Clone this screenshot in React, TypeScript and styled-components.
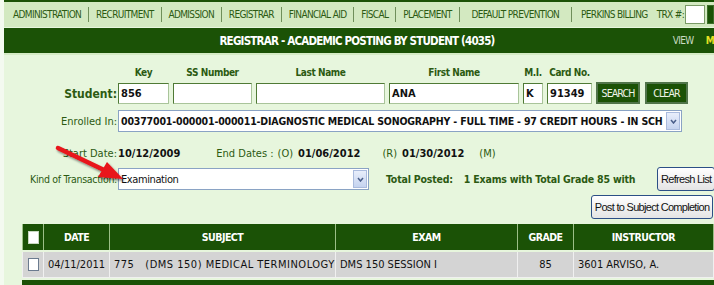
import React from 'react';
import styled, { createGlobalStyle } from 'styled-components';

const GlobalStyle = createGlobalStyle`
  html, body {
    margin: 0;
    padding: 0;
    background: #ffffff;
    font-family: 'DejaVu Sans Condensed', 'DejaVu Sans', sans-serif;
  }
`;

const DARK = '#1b5206';
const NAV_BG = '#d3e9c1';
const BODY_BG = '#e7f6dd';
const LABEL = '#2c5a12';

const Page = styled.div`
  position: relative;
  width: 714px;
  height: 285px;
  overflow: hidden;
  background: ${BODY_BG};
  border-left: 4px solid #f4faf0;
  box-sizing: border-box;
`;

const TopLine = styled.div`
  height: 2px;
  background: ${DARK};
  margin-left: -4px;
`;

const Nav = styled.div`
  display: flex;
  align-items: center;
  height: 25px;
  background: ${NAV_BG};
  padding-left: 13px;
  margin-left: -4px;
  font-size: 10px;
  letter-spacing: -0.65px;
  color: ${LABEL};
  white-space: nowrap;
`;

const NavItem = styled.span<{ $pad?: number }>`
  padding: 0 ${(p) => p.$pad ?? 7}px;
  &:first-child {
    padding-left: 0;
  }
`;

const NavSep = styled.span`
  width: 1px;
  height: 15px;
  background: #6f8f5a;
`;

const TrxInput = styled.span`
  display: inline-block;
  box-sizing: border-box;
  width: 25px;
  height: 19px;
  background: #fff;
  border: 1px solid #7a9a66;
  margin-left: 1px;
`;

const TrxGo = styled.span`
  display: inline-block;
  box-sizing: border-box;
  width: 8px;
  height: 19px;
  margin-left: 2px;
  background: ${DARK};
  border: 1px solid #3d6e2a;
`;

const TitleBar = styled.div`
  position: relative;
  display: flex;
  align-items: center;
  justify-content: center;
  height: 25px;
  margin-top: 1px;
  margin-left: -4px;
  background: ${DARK};
  color: #fff;
  font-weight: bold;
  font-size: 11.5px;
  letter-spacing: -0.8px;
  border-bottom: 2px solid #d5ebc5;
`;

const ViewLink = styled.span`
  position: absolute;
  right: 0;
  top: 7px;
  font-size: 10px;
  font-weight: normal;
  letter-spacing: -0.6px;
  color: #c9dcc2;
  b {
    color: #e5e023;
    margin-left: 12px;
  }
`;

const Form = styled.div`
  display: grid;
  grid-template-columns: 113px 1fr;
  column-gap: 1px;
  align-items: center;
  font-size: 11px;
  color: ${LABEL};
`;

const Label = styled.div<{ $bold?: boolean; $top?: number; $narrow?: boolean }>`
  text-align: right;
  font-weight: ${(p) => (p.$bold ? 'bold' : 'normal')};
  font-size: ${(p) => (p.$bold ? 12 : p.$narrow ? 10.5 : 11)}px;
  letter-spacing: ${(p) => (p.$narrow ? -0.3 : 0)}px;
  margin-top: ${(p) => p.$top ?? 0}px;
  white-space: nowrap;
`;

const StudentRow = styled.div`
  display: flex;
  align-items: flex-end;
  gap: 4px;
  margin-top: 12px;
`;

const Field = styled.div`
  display: flex;
  flex-direction: column;
  align-items: center;
  gap: 5px;
`;

const Heading = styled.div`
  font-weight: bold;
  font-size: 10px;
  letter-spacing: -0.4px;
  color: ${LABEL};
  white-space: nowrap;
`;

const TextBox = styled.div<{ $w: number }>`
  box-sizing: border-box;
  width: ${(p) => p.$w}px;
  height: 21px;
  background: #fff;
  border: 1px solid #4f7a35;
  border-right-color: #a9c49a;
  border-bottom-color: #a9c49a;
  color: #111;
  font-weight: bold;
  font-size: 11px;
  padding: 3px 2px 0;
  white-space: nowrap;
`;

const GreenButton = styled.div<{ $w: number; $gap?: number }>`
  box-sizing: border-box;
  width: ${(p) => p.$w}px;
  height: 22px;
  background: ${DARK};
  border: 2px solid #50744a;
  color: #f0f4e8;
  font-size: 10.5px;
  letter-spacing: -0.9px;
  display: flex;
  align-items: center;
  justify-content: center;
  margin-left: ${(p) => p.$gap ?? 0}px;
`;

const Select = styled.div<{ $w: number; $top?: number; $bold?: boolean }>`
  box-sizing: border-box;
  position: relative;
  width: ${(p) => p.$w}px;
  height: 22px;
  margin-top: ${(p) => p.$top ?? 0}px;
  background: #fff;
  border: 1px solid #8aa3c4;
  color: #111;
  font-size: ${(p) => (p.$bold ? 10.5 : 11)}px;
  letter-spacing: ${(p) => (p.$bold ? -0.17 : -0.4)}px;
  font-weight: ${(p) => (p.$bold ? 'bold' : 'normal')};
  padding: 4px 2px 0;
  white-space: nowrap;
  overflow: hidden;
`;

const Caret = styled.span`
  position: absolute;
  right: 1px;
  top: 1px;
  width: 14px;
  height: 18px;
  background: linear-gradient(#e8eefb, #c5d3ef);
  border: 1px solid #aabbdd;
  box-sizing: border-box;
  display: flex;
  align-items: center;
  justify-content: center;
`;

const DatesRow = styled.div`
  display: flex;
  align-items: center;
  margin-top: 13px;
  height: 16px;
  white-space: nowrap;
`;

const DateValue = styled.span<{ $gap?: number }>`
  color: #111;
  font-weight: bold;
  font-size: 11px;
  margin-right: ${(p) => p.$gap ?? 0}px;
`;

const DateTag = styled.span<{ $gap?: number }>`
  margin-right: ${(p) => p.$gap ?? 4}px;
`;

const TransRow = styled.div`
  display: flex;
  align-items: center;
  margin-top: 6px;
  white-space: nowrap;
`;

const Totals = styled.span`
  font-weight: bold;
  font-size: 10.5px;
  letter-spacing: -0.2px;
  margin-left: 17px;
  width: 271px;
  display: inline-block;
  span {
    margin-left: 11px;
  }
`;

const GreyButton = styled.div`
  box-sizing: border-box;
  height: 24px;
  padding: 0 3px;
  border: 1px solid #2c4f86;
  border-radius: 3px;
  background: linear-gradient(#ffffff, #e4e4e4);
  color: #111;
  font-family: 'Liberation Sans', Arial, sans-serif;
  font-size: 11px;
  letter-spacing: -0.7px;
  display: flex;
  align-items: center;
  white-space: nowrap;
`;

const ButtonRow = styled.div`
  display: flex;
  justify-content: flex-end;
  margin-top: 4px;
  grid-column: 1 / 3;
  padding-right: 2px;
`;

const Table = styled.table`
  margin: 5px 0 0 18px;
  border-collapse: collapse;
  width: 692px;
  table-layout: fixed;
  font-size: 11px;
`;

const Th = styled.th<{ $w?: number }>`
  width: ${(p) => (p.$w ? `${p.$w}px` : 'auto')};
  height: 26px;
  padding: 0;
  background: ${DARK};
  color: #fff;
  font-weight: bold;
  font-size: 10.5px;
  letter-spacing: -0.5px;
  border: 1px solid #9bbf86;
  border-top: none;
  border-bottom: 2px solid #e7f6dd;
`;

const Td = styled.td<{ $center?: boolean; $wide?: boolean }>`
  height: 25px;
  padding: 0 4px;
  background: #d4d4d4;
  color: #111;
  border: 1px solid #f0f0f0;
  text-align: ${(p) => (p.$center ? 'center' : 'left')};
  letter-spacing: ${(p) => (p.$wide ? 0.5 : 0)}px;
  white-space: nowrap;
  overflow: hidden;
`;

const Check = styled.span<{ $head?: boolean }>`
  display: inline-block;
  width: 9px;
  height: 11px;
  background: #fff;
  border: 1px solid ${(p) => (p.$head ? '#c8d8c0' : '#6b7b8f')};
  vertical-align: middle;
`;

const FooterBar = styled.div`
  height: 8px;
  margin: 2px 0 0 18px;
  background: ${DARK};
`;

const ArrowLayer = styled.svg`
  position: absolute;
  left: 0;
  top: 0;
  pointer-events: none;
`;

const navItems = [
  'ADMINISTRATION',
  'RECRUITMENT',
  'ADMISSION',
  'REGISTRAR',
  'FINANCIAL AID',
  'FISCAL',
  'PLACEMENT',
];

const fields = [
  { head: 'Key', w: 51, value: '856' },
  { head: 'SS Number', w: 79, value: '' },
  { head: 'Last Name', w: 129, value: '' },
  { head: 'First Name', w: 130, value: 'ANA' },
  { head: 'M.I.', w: 20, value: 'K' },
  { head: 'Card No.', w: 45, value: '91349' },
];

const CaretIcon = () => (
  <svg width="7" height="5" viewBox="0 0 7 5">
    <path d="M1 1 L3.5 4 L6 1" stroke="#4a5f8a" strokeWidth="1.5" fill="none" />
  </svg>
);

export default function App() {
  return (
    <>
      <GlobalStyle />
      <Page>
        <TopLine />
        <Nav>
          {navItems.map((item) => (
            <React.Fragment key={item}>
              <NavItem>{item}</NavItem>
              <NavSep />
            </React.Fragment>
          ))}
          <NavItem $pad={12}>DEFAULT PREVENTION</NavItem>
          <NavSep />
          <NavItem $pad={9}>PERKINS BILLING</NavItem>
          <NavItem $pad={0}>TRX #:</NavItem>
          <TrxInput />
          <TrxGo />
        </Nav>
        <TitleBar>
          REGISTRAR - ACADEMIC POSTING BY STUDENT (4035)
          <ViewLink>
            VIEW<b>M</b>
          </ViewLink>
        </TitleBar>

        <Form>
          <Label $bold style={{ alignSelf: 'end', paddingBottom: 3 }}>
            Student:
          </Label>
          <StudentRow>
            {fields.map((f) => (
              <Field key={f.head}>
                <Heading>{f.head}</Heading>
                <TextBox $w={f.w}>{f.value}</TextBox>
              </Field>
            ))}
            <GreenButton $w={44}>SEARCH</GreenButton>
            <GreenButton $w={43} $gap={1}>
              CLEAR
            </GreenButton>
          </StudentRow>

          <Label $top={6}>Enrolled In:</Label>
          <Select $w={564} $top={6} $bold>
            00377001-000001-000011-DIAGNOSTIC MEDICAL SONOGRAPHY - FULL TIME - 97 CREDIT HOURS - IN SCH
            <Caret>
              <CaretIcon />
            </Caret>
          </Select>

          <Label $top={13}>Start Date:</Label>
          <DatesRow>
            <DateValue $gap={36}>10/12/2009</DateValue>
            <DateTag $gap={4}>End Dates :</DateTag>
            <DateTag $gap={5}>(O)</DateTag>
            <DateValue $gap={22}>01/06/2012</DateValue>
            <DateTag $gap={5}>(R)</DateTag>
            <DateValue $gap={15}>01/30/2012</DateValue>
            <DateTag>(M)</DateTag>
          </DatesRow>

          <Label $top={6} $narrow>
            Kind of Transaction:
          </Label>
          <TransRow>
            <Select $w={251}>
              Examination
              <Caret>
                <CaretIcon />
              </Caret>
            </Select>
            <Totals>
              Total Posted:<span>1 Exams with Total Grade 85 with</span>
            </Totals>
            <GreyButton>Refresh List</GreyButton>
          </TransRow>
          <ButtonRow>
            <GreyButton>Post to Subject Completion</GreyButton>
          </ButtonRow>
        </Form>

        <Table>
          <thead>
            <tr>
              <Th $w={20}>
                <Check $head />
              </Th>
              <Th $w={65}>DATE</Th>
              <Th $w={225}>SUBJECT</Th>
              <Th $w={181}>EXAM</Th>
              <Th $w={55}>GRADE</Th>
              <Th>INSTRUCTOR</Th>
            </tr>
          </thead>
          <tbody>
            <tr>
              <Td $center style={{ padding: 0 }}>
                <Check />
              </Td>
              <Td>04/11/2011</Td>
              <Td $wide>775&nbsp;&nbsp;&nbsp;(DMS 150) MEDICAL TERMINOLOGY</Td>
              <Td>DMS 150 SESSION I</Td>
              <Td $center>85</Td>
              <Td>3601 ARVISO, A.</Td>
            </tr>
          </tbody>
        </Table>
        <FooterBar />

        <ArrowLayer width="714" height="285">
          <defs>
            <filter id="shadow" x="-20%" y="-20%" width="140%" height="140%">
              <feDropShadow dx="1.5" dy="2" stdDeviation="1.2" floodColor="#000" floodOpacity="0.45" />
            </filter>
          </defs>
          <g filter="url(#shadow)">
            <line x1="54" y1="148" x2="100" y2="170" stroke="#e8141a" strokeWidth="4.5" strokeLinecap="round" />
            <polygon points="119,179 94,177 103,162" fill="#e8141a" />
          </g>
        </ArrowLayer>
      </Page>
    </>
  );
}
